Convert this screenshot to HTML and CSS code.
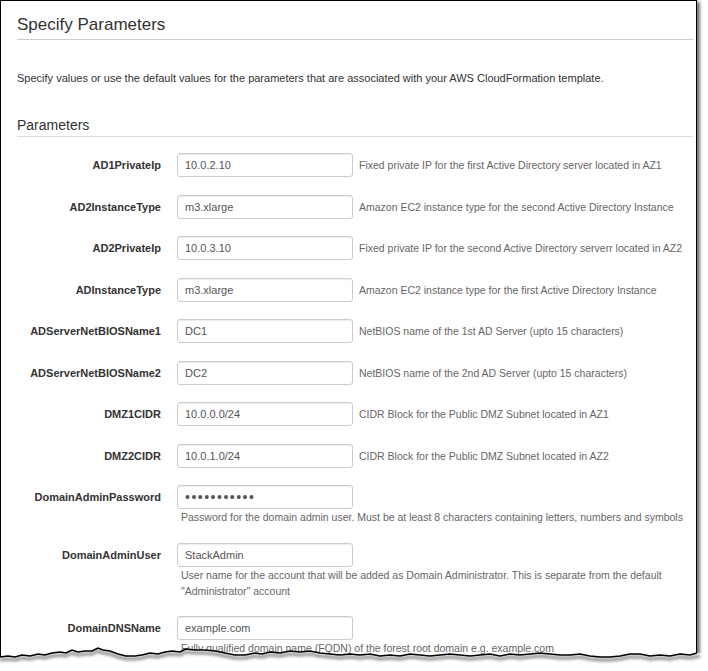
FILE: index.html
```html
<!DOCTYPE html>
<html lang="en">
<head>
  <meta charset="UTF-8">
  <title>Specify Parameters</title>
  <link rel="stylesheet" href="styles.css">
</head>
<body>
  <div class="sheet">
    <div class="frame">
      <h1>Specify Parameters</h1>
      <p class="intro">Specify values or use the default values for the parameters that are associated with your AWS CloudFormation template.</p>

      <h2>Parameters</h2>

      <div class="params">
        <div class="row">
          <label>AD1PrivateIp</label>
          <input type="text" value="10.0.2.10">
          <span class="help">Fixed private IP for the first Active Directory server located in AZ1</span>
        </div>
        <div class="row">
          <label>AD2InstanceType</label>
          <input type="text" value="m3.xlarge">
          <span class="help">Amazon EC2 instance type for the second Active Directory Instance</span>
        </div>
        <div class="row">
          <label>AD2PrivateIp</label>
          <input type="text" value="10.0.3.10">
          <span class="help">Fixed private IP for the second Active Directory serverr located in AZ2</span>
        </div>
        <div class="row">
          <label>ADInstanceType</label>
          <input type="text" value="m3.xlarge">
          <span class="help">Amazon EC2 instance type for the first Active Directory Instance</span>
        </div>
        <div class="row">
          <label>ADServerNetBIOSName1</label>
          <input type="text" value="DC1">
          <span class="help">NetBIOS name of the 1st AD Server (upto 15 characters)</span>
        </div>
        <div class="row">
          <label>ADServerNetBIOSName2</label>
          <input type="text" value="DC2">
          <span class="help">NetBIOS name of the 2nd AD Server (upto 15 characters)</span>
        </div>
        <div class="row">
          <label>DMZ1CIDR</label>
          <input type="text" value="10.0.0.0/24">
          <span class="help">CIDR Block for the Public DMZ Subnet located in AZ1</span>
        </div>
        <div class="row">
          <label>DMZ2CIDR</label>
          <input type="text" value="10.0.1.0/24">
          <span class="help">CIDR Block for the Public DMZ Subnet located in AZ2</span>
        </div>
        <div class="row stacked">
          <label>DomainAdminPassword</label>
          <input type="password" class="secret" value="Password123">
          <span class="help">Password for the domain admin user. Must be at least 8 characters containing letters, numbers and symbols</span>
        </div>
        <div class="row stacked">
          <label>DomainAdminUser</label>
          <input type="text" value="StackAdmin">
          <span class="help">User name for the account that will be added as Domain Administrator. This is separate from the default "Administrator" account</span>
        </div>
        <div class="row stacked">
          <label>DomainDNSName</label>
          <input type="text" value="example.com">
          <span class="help">Fully qualified domain name (FQDN) of the forest root domain e.g. example.com</span>
        </div>
      </div>
    </div>

    <!-- torn paper edge at the bottom of the screenshot -->
    <svg class="tear" width="708" height="31" viewBox="0 0 708 31">
      <defs>
        <filter id="soft" x="-5%" y="-50%" width="110%" height="200%">
          <feGaussianBlur stdDeviation="1.6"/>
        </filter>
      </defs>
      <polygon fill="#fff" points="0,17 8,16 15,17 22,15 30,16 38,14 45,15 52,13 60,12 66,13 72,10 78,12 85,11 92,11 98,8 103,10 110,11 118,14 126,16 135,16 142,15 150,13 158,14 165,12 172,11 180,12 186,9 195,10 205,10 215,11 225,13 235,15 245,15 255,13 262,14 270,12 280,13 290,11 300,12 310,11 320,13 330,14 340,15 350,14 360,15 370,14 380,16 390,15 400,16 410,14 420,15 430,16 440,15 450,14 460,15 470,16 480,15 490,14 500,16 510,14 520,15 530,14 540,13 550,14 560,15 570,15 580,14 590,16 600,17 610,17 620,16 630,14 640,14 650,16 660,15 670,16 680,14 690,15 697,13 708,13 708,31 0,31"/>
      <polyline class="tear-shadow" filter="url(#soft)" points="0,20 8,19 15,20 22,18 30,19 38,17 45,18 52,16 60,15 66,16 72,13 78,15 85,14 92,14 98,11 103,13 110,14 118,17 126,19 135,19 142,18 150,16 158,17 165,15 172,14 180,15 186,12 195,13 205,13 215,14 225,16 235,18 245,18 255,16 262,17 270,15 280,16 290,14 300,15 310,14 320,16 330,17 340,18 350,17 360,18 370,17 380,19 390,18 400,19 410,17 420,18 430,19 440,18 450,17 460,18 470,19 480,18 490,17 500,19 510,17 520,18 530,17 540,16 550,17 560,18 570,18 580,17 590,19 600,20 610,20 620,19 630,17 640,17 650,19 660,18 670,19 680,17 690,18 700,16"/>
      <polyline class="tear-line" points="0,17 8,16 15,17 22,15 30,16 38,14 45,15 52,13 60,12 66,13 72,10 78,12 85,11 92,11 98,8 103,10 110,11 118,14 126,16 135,16 142,15 150,13 158,14 165,12 172,11 180,12 186,9 195,10 205,10 215,11 225,13 235,15 245,15 255,13 262,14 270,12 280,13 290,11 300,12 310,11 320,13 330,14 340,15 350,14 360,15 370,14 380,16 390,15 400,16 410,14 420,15 430,16 440,15 450,14 460,15 470,16 480,15 490,14 500,16 510,14 520,15 530,14 540,13 550,14 560,15 570,15 580,14 590,16 600,17 610,17 620,16 630,14 640,14 650,16 660,15 670,16 680,14 690,15 697,13"/>
    </svg>
  </div>
</body>
</html>
```

FILE: styles.css
```css
body {
  margin: 0;
  background: #fff;
  font-family: "Liberation Sans", Arial, sans-serif;
  color: #333;
}
.sheet {
  position: relative;
  width: 708px;
  height: 671px;
  overflow: hidden;
}
.frame {
  box-sizing: border-box;
  width: 697px;
  height: 668px;
  border: 1px solid #000;
  border-bottom: none;
  padding: 0 3px 0 16px;
  box-shadow: 3px 2px 3px rgba(0, 0, 0, 0.55);
  overflow: hidden;
  background: #fff;
}
h1 {
  font-size: 17px;
  font-weight: normal;
  margin: 14px 0 0;
  padding-bottom: 4px;
  line-height: 20px;
  border-bottom: 1px solid #ccc;
}
.intro {
  font-size: 11px;
  line-height: 14px;
  margin: 31px 0 0;
}
h2 {
  font-size: 14px;
  font-weight: normal;
  line-height: 18px;
  margin: 31px 0 0;
  padding-bottom: 2px;
  border-bottom: 1px solid #ddd;
}
.params {
  padding-top: 16px;
}
.row {
  display: grid;
  grid-template-columns: 160px 176px 1fr;
  align-items: center;
  margin-bottom: 17.5px;
}
.row label {
  font-size: 11px;
  font-weight: bold;
  text-align: right;
  padding-right: 16px;
}
.row input {
  box-sizing: border-box;
  width: 176px;
  height: 24px;
  padding: 0 7px;
  border: 1px solid #ccc;
  border-radius: 3px;
  box-shadow: inset 0 1px 1px rgba(0, 0, 0, 0.075);
  font-family: "Liberation Sans", Arial, sans-serif;
  font-size: 11px;
  color: #555;
  background: #fff;
}
.row input.secret {
  font-size: 14px;
  letter-spacing: 1.5px;
}
.row .help {
  font-size: 10.5px;
  color: #666;
  padding-left: 6px;
}
.row.stacked .help {
  grid-column: 2 / 4;
  padding-left: 4px;
  line-height: 16px;
}
.tear {
  position: absolute;
  left: 0;
  top: 640px;
}
.tear-shadow {
  fill: none;
  stroke: rgba(0, 0, 0, 0.45);
  stroke-width: 3;
}
.tear-line {
  fill: none;
  stroke: #000;
  stroke-width: 1.4;
}
```
